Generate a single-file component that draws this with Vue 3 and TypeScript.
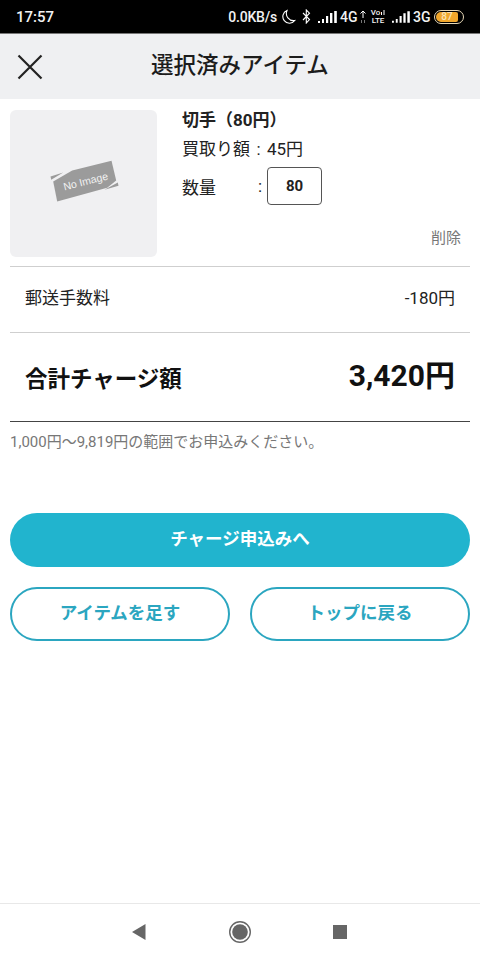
<script setup lang="ts">
const itemName = '切手（80円）'
const fee = '-180円'
const total = '3,420円'
</script>

<template>
  <div class="phone">
    <div class="status">
      <span class="time">17:57</span>
      <div class="status-right">
        <span class="speed">0.0KB/s</span>
        <svg class="moon" width="15" height="16" viewBox="0 0 15 16"><path d="M6 1.500A6.600 6.600 0 1 0 13.800 11.500 7.200 7.200 0 0 1 6 1.500Z" fill="none" stroke="#fff" stroke-width="1.100"/></svg>
        <svg class="bt" width="9" height="15" viewBox="0 0 9 15"><path d="M1 4l6.500 6.600L4.300 14V1l3.200 3.200L1 11" fill="none" stroke="#fff" stroke-width="1.100"/></svg>
        <svg class="sig" width="19" height="14" viewBox="0 0 19 14"><path d="M0 11h2v2H0zM4 9h2v4H4zM8 6h2.200v7H8zM12 3h2.400v10H12zM16.200 1h2.600v12h-2.600z" fill="#fff"/></svg>
        <span class="net">4G</span>
        <svg class="updown" width="6" height="14" viewBox="0 0 6 14"><path d="M3 1v7M.5 3.500L3 1l2.500 2.500" fill="none" stroke="#fff" stroke-width="1"/><path d="M1.500 10v3M4.500 10v3" stroke="#777" stroke-width="1"/></svg>
        <span class="volte">
          <span class="vo">Vo<svg width="4" height="7" viewBox="0 0 4 7"><path d="M.5 3v3M3 1v5" stroke="#fff" stroke-width="1"/></svg></span>
          <span class="lte">LTE</span>
        </span>
        <svg class="sig sig2" width="18" height="14" viewBox="0 0 19 14"><path d="M0 11h2v2H0zM4 9h2v4H4zM8 6h2.200v7H8zM12 3h2.400v10H12zM16.200 1h2.600v12h-2.600z" fill="#fff"/></svg>
        <span class="net">3G</span>
        <span class="battery"><b>87</b></span>
      </div>
    </div>

    <header class="head">
      <svg class="close" width="26" height="26" viewBox="0 0 26 26"><path d="M1.500 1.500L24.500 24.500M24.500 1.500L1.500 24.500" stroke="#222" stroke-width="2.200" fill="none"/></svg>
      <h1>選択済みアイテム</h1>
    </header>

    <main class="content">
      <section class="item">
        <div class="thumb">
          <svg width="72" height="48" viewBox="0 0 72 48">
            <path d="M5.200 21.500L24.200 10.500 63.500.8 68.200 20.500 59.200 27.800 9.200 41.500z" fill="#9b9b9b"/>
            <path d="M2.500 16.500L15.200 12.500 3.200 19.800zM69.800 22.500L56.500 29.800 70.500 25.800z" fill="#9b9b9b"/>
            <text x="37.500" y="25" text-anchor="middle" transform="rotate(-14 37.500 21)" class="noimg">No Image</text>
          </svg>
        </div>
        <div class="info">
          <div class="name">{{ itemName }}</div>
          <div class="price">買取り額<span class="price-colon">:</span>45円</div>
          <div class="qty">
            <span class="qty-label">数量</span>
            <span class="colon">:</span>
            <span class="qty-box">80</span>
          </div>
          <div class="del">削除</div>
        </div>
      </section>

      <div class="fee">
        <span>郵送手数料</span>
        <span>{{ fee }}</span>
      </div>

      <div class="total">
        <span class="total-label">合計チャージ額</span>
        <span class="total-value">{{ total }}</span>
      </div>

      <p class="note">1,000円～9,819円の範囲でお申込みください。</p>

      <button class="btn primary">チャージ申込みへ</button>
      <div class="pair">
        <button class="btn outline">アイテムを足す</button>
        <button class="btn outline">トップに戻る</button>
      </div>
    </main>

    <nav class="navbar">
      <svg width="16" height="18" viewBox="0 0 16 18"><path d="M14.500 1v16L1 9z" fill="#666"/></svg>
      <svg width="24" height="24" viewBox="0 0 24 24"><circle cx="12" cy="12" r="10.300" fill="none" stroke="#666" stroke-width="1.400"/><circle cx="12" cy="12" r="7.800" fill="#666"/></svg>
      <svg class="stop" width="16" height="16" viewBox="0 0 16 16"><rect x="1" y="1" width="14" height="14" fill="#666"/></svg>
    </nav>
  </div>
</template>

<style scoped>
.phone {
  width: 480px;
  height: 960px;
  display: flex;
  flex-direction: column;
  background: #fff;
  color: #222;
  font-family: Roboto, "Noto Sans CJK JP", sans-serif;
  overflow: hidden;
}
.status {
  height: 33px;
  flex: none;
  background: #000;
  color: #f2f2f2;
  display: flex;
  align-items: center;
  justify-content: space-between;
  padding: 0 16px;
  border-bottom: 1px solid #777;
  box-sizing: content-box;
}
.time { font-size: 15px; font-weight: 500; }
.status-right { display: flex; align-items: center; }
.speed { font-size: 14px; font-weight: 500; margin-right: 4px; letter-spacing: -0.2px; }
.moon { margin-right: 6px; }
.bt { margin-right: 7px; }
.sig { margin-right: 3px; }
.net { font-size: 14px; font-weight: 500; width: 18px; white-space: nowrap; }
.updown { margin: 0 5px 0 2px; }
.volte {
  display: flex;
  flex-direction: column;
  align-items: center;
  width: 14px;
  height: 15px;
  font-size: 8px;
  line-height: 7.500px;
  font-weight: 500;
  margin-right: 7px;
}
.vo { display: flex; align-items: center; gap: 1px; height: 7.500px; }
.lte { height: 7.500px; }
.battery {
  width: 30px;
  height: 14px;
  margin-left: 3px;
  border: 1px solid #e8d9b8;
  border-radius: 7px;
  box-sizing: border-box;
  padding: 1px;
  display: flex;
}
.battery b {
  flex: 1;
  background: #f0a62c;
  border-radius: 5px 2px 2px 5px;
  margin-right: 4px;
  font-size: 10px;
  line-height: 10px;
  font-weight: 500;
  text-align: center;
  color: #f9e3b5;
}
.head {
  height: 65px;
  flex: none;
  background: #eff0f2;
  display: flex;
  align-items: center;
  justify-content: center;
  position: relative;
}
.close { position: absolute; left: 17px; top: 20px; }
.head h1 {
  margin: 0 0 8px;
  font-size: 22.500px;
  font-weight: 500;
  color: #1c1c1c;
}
.content {
  flex: 1;
  padding: 11px 10px 0;
  display: flex;
  flex-direction: column;
}
.item {
  display: flex;
  height: 156px;
  border-bottom: 1px solid #cfcfcf;
  box-sizing: content-box;
}
.thumb {
  width: 147px;
  height: 147px;
  background: #f0f0f2;
  border-radius: 6px;
  display: flex;
  align-items: center;
  justify-content: center;
  flex: none;
}
.noimg { font-size: 10.500px; fill: #f2f2f2; font-family: "Liberation Sans", sans-serif; }
.info { margin-left: 25px; flex: 1; display: flex; flex-direction: column; }
.name { font-size: 17px; font-weight: 700; line-height: 20px; }
.price { font-size: 17px; line-height: 20px; margin-top: 9px; }
.price-colon { display: inline-block; width: 17px; text-align: center; }
.qty { display: flex; align-items: center; margin-top: 8px; font-size: 17px; }
.qty-label { width: 76px; }
.colon { width: 9px; }
.qty-box {
  width: 55px;
  height: 38px;
  border: 1px solid #555;
  border-radius: 4px;
  box-sizing: border-box;
  display: flex;
  align-items: center;
  justify-content: center;
  font-size: 15px;
  font-weight: 700;
}
.del { margin-top: 23px; font-size: 15px; line-height: 20px; color: #777; text-align: right; padding-right: 9px; }
.fee {
  height: 66px;
  display: flex;
  align-items: center;
  justify-content: space-between;
  padding: 0 15px 6px;
  box-sizing: border-box;
  font-size: 17px;
  border-bottom: 1px solid #cfcfcf;
}
.total {
  height: 89px;
  box-sizing: border-box;
  display: flex;
  align-items: center;
  justify-content: space-between;
  padding: 0 15px;
  border-bottom: 1px solid #444;
}
.total-label { font-size: 22.500px; font-weight: 700; color: #111; }
.total-value { font-size: 30px; font-weight: 700; color: #111; margin-bottom: 8px; }
.note { margin: 10px 0 0; font-size: 15px; line-height: 20px; color: #777; }
.btn {
  font-family: inherit;
  font-weight: 700;
  font-size: 17.500px;
  border-radius: 27px;
  height: 54px;
  cursor: pointer;
  box-sizing: border-box;
  padding: 0 0 5px;
}
.primary {
  margin-top: 61px;
  border: none;
  width: 100%;
  background: #21b4ce;
  color: #fff;
}
.pair { display: flex; gap: 20px; margin-top: 20px; }
.outline {
  flex: 1;
  background: #fff;
  border: 2px solid #2ba6c0;
  color: #2ba6c0;
}
.navbar {
  height: 56px;
  flex: none;
  border-top: 1px solid #e8e8e8;
  display: flex;
  align-items: center;
  justify-content: center;
  gap: 81px;
  padding-right: 2px;
}
.stop { margin-left: -1px; }
</style>
